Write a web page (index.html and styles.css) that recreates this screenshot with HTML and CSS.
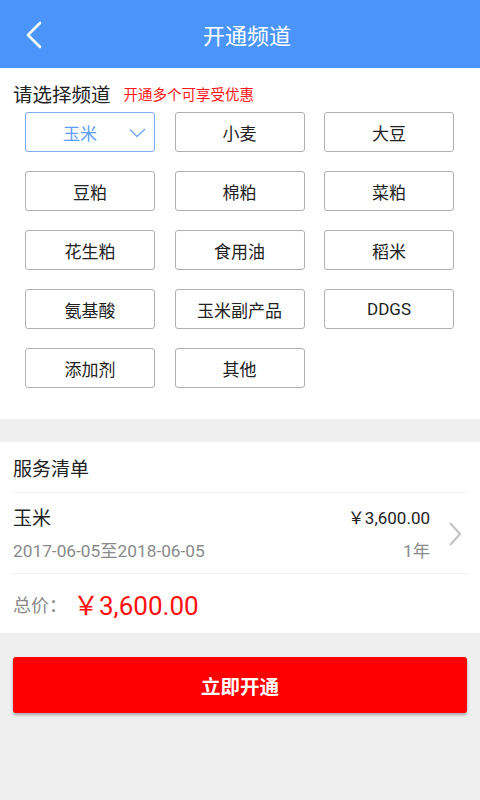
FILE: index.html
```html
<!DOCTYPE html>
<html lang="zh">
<head>
<meta charset="utf-8">
<link rel="stylesheet" href="styles.css">
</head>
<body>
<header class="topbar">
  <svg class="back" width="20" height="30" viewBox="0 0 20 30"><path d="M16 3 L4 15 L16 27" fill="none" stroke="#fff" stroke-width="2.6" stroke-linecap="round" stroke-linejoin="round"/></svg>
  <h1 class="title">开通频道</h1>
</header>

<section class="panel channels">
  <div class="head">
    <span class="head-title">请选择频道</span>
    <span class="head-note">开通多个可享受优惠</span>
  </div>
  <div class="grid">
    <div class="chip selected">玉米
      <svg class="check" width="17" height="10" viewBox="0 0 17 10"><path d="M1 1.5 L8 8.5 L16 1" fill="none" stroke="#6fa6f7" stroke-width="1.4" stroke-linejoin="round"/></svg>
    </div>
    <div class="chip">小麦</div>
    <div class="chip">大豆</div>
    <div class="chip">豆粕</div>
    <div class="chip">棉粕</div>
    <div class="chip">菜粕</div>
    <div class="chip">花生粕</div>
    <div class="chip">食用油</div>
    <div class="chip">稻米</div>
    <div class="chip">氨基酸</div>
    <div class="chip">玉米副产品</div>
    <div class="chip latin">DDGS</div>
    <div class="chip">添加剂</div>
    <div class="chip">其他</div>
  </div>
</section>

<section class="panel services">
  <div class="svc-title">服务清单</div>
  <div class="item">
    <div class="item-main">
      <div class="item-row">
        <span class="item-name">玉米</span>
        <span class="item-price">￥3,600.00</span>
      </div>
      <div class="item-row sub">
        <span class="item-date">2017-06-05至2018-06-05</span>
        <span class="item-term">1年</span>
      </div>
    </div>
    <svg class="arrow" width="16" height="26" viewBox="0 0 16 26"><path d="M3 2 L13 13 L3 24" fill="none" stroke="#c4c4c4" stroke-width="2.2" stroke-linejoin="round"/></svg>
  </div>
  <div class="total">
    <span class="total-label">总价：</span>
    <span class="total-price">￥3,600.00</span>
  </div>
</section>

<div class="action">
  <button class="open-btn">立即开通</button>
</div>
</body>
</html>
```

FILE: styles.css
```css
* { box-sizing: border-box; }
html, body {
  margin: 0;
  padding: 0;
}
body {
  width: 480px;
  min-height: 800px;
  background: #efefef;
  font-family: Roboto, "Noto Sans CJK SC", sans-serif;
  color: #222;
}
.topbar {
  height: 68px;
  background: #4b94fa;
  display: flex;
  align-items: center;
  position: relative;
}
.back {
  position: absolute;
  left: 24px;
  top: 20px;
}
.title {
  margin: 0;
  flex: 1;
  text-align: center;
  padding-left: 14px;
  font-size: 22px;
  font-weight: normal;
  color: #fff;
  font-family: "Noto Sans CJK SC", sans-serif;
}
.panel {
  background: #fff;
}
.channels {
  padding: 12px 0 31px;
}
.head {
  display: flex;
  align-items: center;
  padding-left: 13px;
  height: 26px;
}
.head-title {
  font-size: 19.5px;
  color: #222;
  font-family: "Noto Sans CJK SC", sans-serif;
}
.head-note {
  margin-left: 13px;
  font-size: 14.5px;
  color: #ff1515;
  font-family: "Noto Sans CJK SC", sans-serif;
}
.grid {
  margin-top: 6px;
  padding-left: 25px;
  display: grid;
  grid-template-columns: repeat(3, 130px);
  column-gap: 19.5px;
  row-gap: 19px;
}
.chip {
  height: 40px;
  border: 1.5px solid #b0b0b0;
  border-radius: 3px;
  display: flex;
  align-items: center;
  justify-content: center;
  font-size: 17px;
  color: #222;
  font-family: "Noto Sans CJK SC", sans-serif;
  position: relative;
}
.chip.latin {
  font-family: Roboto, sans-serif;
  font-size: 17px;
}
.chip.selected {
  border-color: #7aaef8;
  color: #5e9cf6;
  padding-right: 20px;
}
.check {
  position: absolute;
  right: 8px;
  top: 15px;
}
.services {
  margin-top: 23px;
  padding: 0 13px;
}
.svc-title {
  height: 51px;
  display: flex;
  align-items: center;
  font-size: 19px;
  color: #222;
  font-family: "Noto Sans CJK SC", sans-serif;
  border-bottom: 1px solid #f2f2f2;
}
.item {
  height: 81px;
  display: flex;
  align-items: center;
  border-bottom: 1px solid #f2f2f2;
}
.item-main {
  width: 417px;
  display: flex;
  flex-direction: column;
  gap: 9px;
}
.item-row {
  display: flex;
  justify-content: space-between;
  align-items: center;
  height: 24px;
}
.item-name {
  font-size: 19px;
  color: #222;
  font-family: "Noto Sans CJK SC", sans-serif;
}
.item-price {
  font-size: 17px;
  color: #222;
}
.item-date, .item-term {
  font-size: 17.3px;
  color: #8a8a8a;
}
.arrow {
  margin-left: 17px;
  margin-top: 2px;
}
.total {
  height: 59px;
  display: flex;
  align-items: center;
}
.total-label {
  font-size: 18px;
  color: #8a8a8a;
  font-family: "Noto Sans CJK SC", sans-serif;
}
.total-price {
  margin-left: 6px;
  font-size: 26px;
  color: #ff1010;
}
.action {
  padding: 24px 13px;
}
.open-btn {
  width: 100%;
  height: 56px;
  border: 0;
  border-radius: 3px;
  background: #ff0000;
  color: #fff;
  font-size: 19.5px;
  font-weight: bold;
  font-family: "Noto Sans CJK SC", sans-serif;
  box-shadow: 0 2px 3px rgba(0,0,0,0.3);
}
```
